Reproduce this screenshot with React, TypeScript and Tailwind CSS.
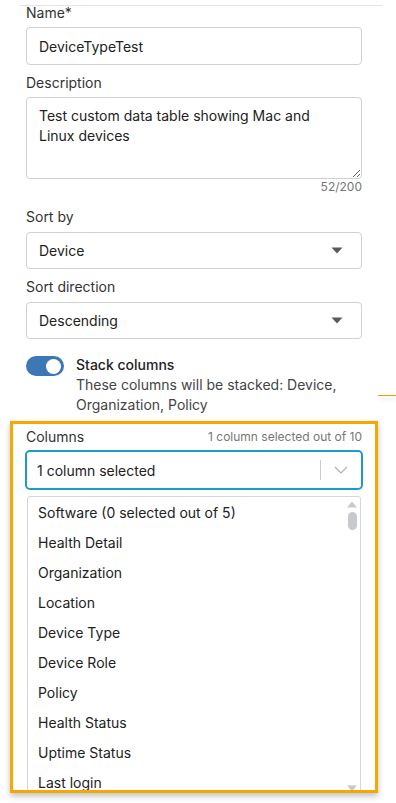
import React from "react";

const items = [
  "Software (0 selected out of 5)",
  "Health Detail",
  "Organization",
  "Location",
  "Device Type",
  "Device Role",
  "Policy",
  "Health Status",
  "Uptime Status",
  "Last login",
];

function Caret() {
  return (
    <svg width="12" height="7" viewBox="0 0 12 7" className="shrink-0">
      <path d="M0.5 0.5 L11.5 0.5 L6 6.5 Z" fill="#5a5a5a" />
    </svg>
  );
}

export default function App() {
  return (
    <div
      className="relative w-[396px] h-[803px] bg-white overflow-hidden text-[#222]"
      style={{ fontFamily: "Inter, 'Noto Sans', sans-serif" }}
    >
      <div className="ml-[20px] mt-[5px] w-[363px] h-px bg-[#e4e4e4]" />
      <div className="px-[26px] w-[388px]">
        <div className="-mt-[3px] text-[14px] leading-[20px] text-[#333]">Name*</div>
        <div className="mt-[4px] h-[38px] border border-[#cfd1d4] rounded-[4px] flex items-center pl-[12px] text-[14px]">
          DeviceTypeTest
        </div>
        <div className="mt-[8px] text-[14px] leading-[20px] text-[#333]">Description</div>
        <textarea
          readOnly
          defaultValue={"Test custom data table showing Mac and Linux devices"}
          className="mt-[4px] block w-full h-[82px] border border-[#cfd1d4] rounded-[4px] px-[12px] pt-[8px] text-[14px] leading-[20px] text-[#222] outline-none resize-y"
          style={{ fontFamily: "Inter, 'Noto Sans', sans-serif" }}
        />
        <div className="text-right text-[12px] leading-[16px] text-[#777]">52/200</div>
        <div className="mt-[12px] text-[14px] leading-[20px] text-[#333]">Sort by</div>
        <div className="mt-[5px] h-[37px] border border-[#cfd1d4] rounded-[4px] flex items-center justify-between pl-[12px] pr-[18px] text-[14px]">
          <span>Device</span>
          <Caret />
        </div>
        <div className="mt-[8px] text-[14px] leading-[20px] text-[#333]">Sort direction</div>
        <div className="mt-[5px] h-[37px] border border-[#cfd1d4] rounded-[4px] flex items-center justify-between pl-[12px] pr-[18px] text-[14px]">
          <span>Descending</span>
          <Caret />
        </div>
        <div className="mt-[16px] flex gap-[12px]">
          <div className="mt-[1px] w-[38px] h-[20px] rounded-full bg-[#3b78b5] flex items-center justify-end pr-[3px] shrink-0">
            <div className="w-[15px] h-[15px] rounded-full bg-white" />
          </div>
          <div>
            <div className="text-[14px] leading-[20px] font-medium text-[#222]">Stack columns</div>
            <div className="text-[14px] leading-[20px] text-[#444]">
              These columns will be stacked: Device,
              <br />
              Organization, Policy
            </div>
          </div>
        </div>
      </div>

      <div className="absolute left-[378px] top-[395px] w-[18px] h-px bg-[#e8a200] shadow-[0_3px_4px_rgba(0,0,0,0.18)]" />

      <div className="mt-[6px] ml-[10px] w-[368px] h-[372px] border-[3px] border-[#f7a800] overflow-hidden shadow-[0_3px_6px_rgba(0,0,0,0.25)] bg-white">
        <div className="px-[13px] pt-[3px]">
          <div className="flex items-center justify-between">
            <span className="text-[14px] leading-[20px] text-[#333]">Columns</span>
            <span className="text-[12px] leading-[20px] text-[#777]">1 column selected out of 10</span>
          </div>
          <div className="mt-[3px] -mx-[1px] h-[40px] border-2 border-[#1d9bc2] rounded-[5px] flex items-center pl-[10px] text-[14px]">
            <span className="flex-1">1 column selected</span>
            <div className="w-px h-[20px] bg-[#cccccc]" />
            <div className="w-[40px] flex justify-center">
              <svg width="14" height="8" viewBox="0 0 14 8">
                <path d="M1 1 L7 7 L13 1" fill="none" stroke="#b0b0b0" strokeWidth="1.2" />
              </svg>
            </div>
          </div>
          <div className="mt-[6px] mx-[1px] border border-[#d4d6da] rounded-[3px] flex h-[320px]">
            <div className="flex-1">
              {items.map((t) => (
                <div key={t} className="h-[30px] flex items-center pl-[10px] text-[14px] text-[#222]">
                  {t}
                </div>
              ))}
            </div>
            <div className="w-[14px] mr-[1px] flex flex-col items-center pt-[4px]">
              <svg width="10" height="7" viewBox="0 0 10 7">
                <path d="M0 6.5 L5 0.5 L10 6.5 Z" fill="#c8c9cc" />
              </svg>
              <div className="mt-[4px] w-[9px] h-[18px] rounded-full bg-[#c8c9cc]" />
              <div className="mt-[255px]">
                <svg width="10" height="7" viewBox="0 0 10 7">
                  <path d="M0 0.5 L10 0.5 L5 6.5 Z" fill="#c8c9cc" />
                </svg>
              </div>
            </div>
          </div>
        </div>
      </div>
    </div>
  );
}
